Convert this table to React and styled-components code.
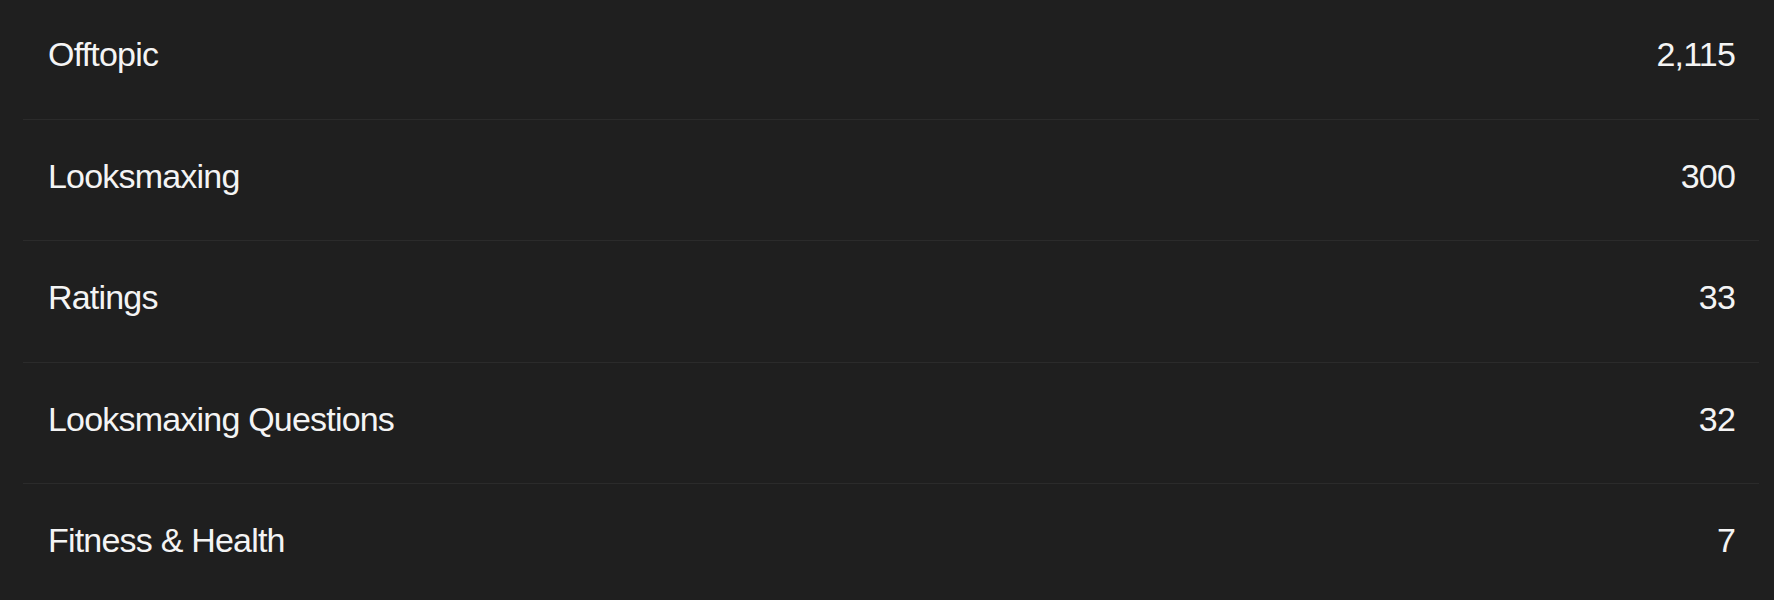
import styled, { createGlobalStyle } from "styled-components";

const Global = createGlobalStyle`
	html, body {
		margin: 0;
		background: #1f1f1f;
	}
	body {
		font-family: "Liberation Sans", Arial, Helvetica, sans-serif;
		overflow: hidden;
	}
`;

// --------------------------------------------------

const forums = [
	{ title: "Offtopic", count: 2115, },
	{ title: "Looksmaxing", count: 300, },
	{ title: "Ratings", count: 33, },
	{ title: "Looksmaxing Questions", count: 32, },
	{ title: "Fitness & Health", count: 7, },
];

const List = styled.ul`
	list-style: none;
	margin: -2px 15px 0 23px;
	padding: 0;
	background: #1f1f1f;
`;

const Row = styled.li`
	box-sizing: border-box;
	height: 121.5px;
	padding: 37px 25px 0 25px;
	border-bottom: 1px solid #2b2b2b;
	display: flex;
	justify-content: space-between;
	align-items: flex-start;
	color: #f4f4f4;
	font-size: 34px;
	letter-spacing: -0.8px;
	line-height: 39px;
	-webkit-font-smoothing: antialiased;

	&:last-child {
		border-bottom: none;
	}
`;

const Title = styled.span`
	white-space: nowrap;
`;

const Count = styled.span`
	font-variant-numeric: tabular-nums;
	margin-right: -1px;
`;

export default () => (
	<>
		<Global />
		<List>
			{ forums.map(({ title, count, }) =>
				<Row key = { title }>
					<Title>{ title }</Title>
					<Count>{ count.toLocaleString("en-US") }</Count>
				</Row>,
			) }
		</List>
	</>
);
